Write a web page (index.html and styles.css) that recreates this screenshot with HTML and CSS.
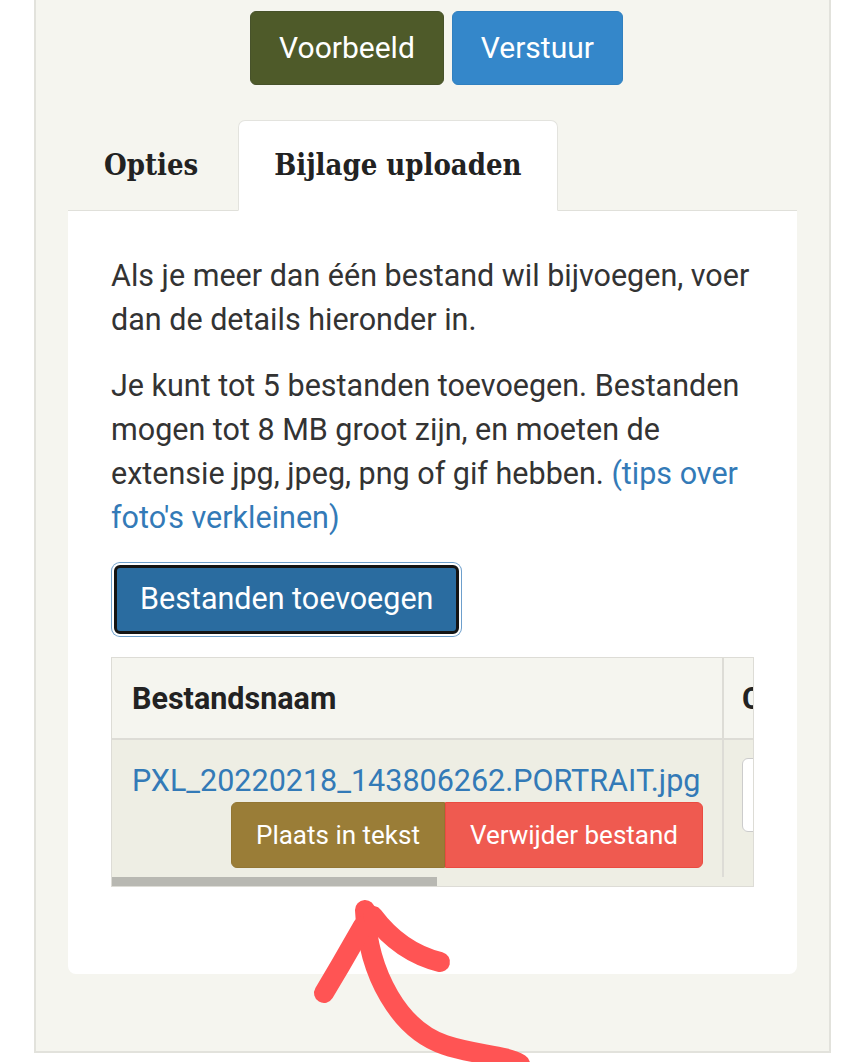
FILE: index.html
```html
<!DOCTYPE html>
<html lang="nl">
<head>
    <meta charset="UTF-8">
    <meta name="viewport" content="width=device-width, initial-scale=1.0">
    <title>Bijlage uploaden</title>
    <link rel="stylesheet" href="styles.css">
</head>
<body>
    <div class="page">
        <div class="actions">
            <button class="btn btn-preview">Voorbeeld</button>
            <button class="btn btn-send">Verstuur</button>
        </div>

        <ul class="tabs">
            <li class="tab">Opties</li>
            <li class="tab active">Bijlage uploaden</li>
        </ul>

        <div class="tab-pane">
            <p>Als je meer dan één bestand wil bijvoegen, voer dan de details hieronder in.</p>
            <p>Je kunt tot 5 bestanden toevoegen. Bestanden mogen tot 8 MB groot zijn, en moeten de extensie jpg, jpeg, png of gif hebben. <a href="#">(tips over foto's verkleinen)</a></p>

            <button class="btn btn-add">Bestanden toevoegen</button>

            <div class="table-frame">
                <div class="table-scroll">
                    <table class="files">
                        <thead>
                            <tr>
                                <th class="col-name">Bestandsnaam</th>
                                <th class="col-caption">Commentaar</th>
                            </tr>
                        </thead>
                        <tbody>
                            <tr>
                                <td class="col-name">
                                    <a href="#" class="file-link">PXL_20220218_143806262.PORTRAIT.jpg</a>
                                    <div class="file-actions">
                                        <button class="btn-sm btn-insert">Plaats in tekst</button><button class="btn-sm btn-remove">Verwijder bestand</button>
                                    </div>
                                </td>
                                <td class="col-caption">
                                    <input type="text" class="caption-input">
                                </td>
                            </tr>
                        </tbody>
                    </table>
                </div>
                <!-- horizontal scrollbar of the table -->
                <div class="scrollbar"><div class="scroll-thumb"></div></div>
            </div>
        </div>
    </div>

    <!-- hand drawn arrow pointing at the buttons -->
    <svg class="scribble" width="864" height="1062" viewBox="0 0 864 1062">
        <g fill="none" stroke="#ff5454" stroke-width="20" stroke-linecap="round" stroke-linejoin="round">
            <path d="M365 910 C368 975 400 1030 445 1045 C475 1055 505 1055 520 1064"/>
            <path d="M363 926 L340 966 L324 993"/>
            <path d="M373 916 Q400 952 440 962"/>
        </g>
    </svg>
</body>
</html>
```

FILE: styles.css
```css
body {
    margin: 0;
    background: #fff;
    font-family: Roboto, "Liberation Sans", sans-serif;
    font-size: 30.5px;
    line-height: 44px;
    color: #333;
}
.page {
    box-sizing: border-box;
    width: 797px;
    margin-left: 34px;
    background: #f5f5ef;
    border: 2px solid #e2e2dc;
    border-top: none;
    padding: 11px 32px 77px;
}
.actions {
    display: flex;
    justify-content: center;
    gap: 8px;
    padding-left: 8px;
}
.btn {
    font-family: inherit;
    font-size: 30px;
    line-height: 40px;
    color: #fff;
    border: 1px solid transparent;
    border-radius: 6px;
    padding: 16px 28px;
    cursor: pointer;
}
.btn-preview {
    background: #4e5a29;
    border-color: #47522a;
}
.btn-send {
    background: #3487ca;
    border-color: #3080c0;
}
.tabs {
    list-style: none;
    margin: 35px 0 0;
    padding: 0;
    display: flex;
    border-bottom: 1px solid #e0e0da;
}
.tab {
    font-family: "DejaVu Serif Condensed", "DejaVu Serif", serif;
    font-weight: bold;
    font-size: 29px;
    color: #222;
    padding: 22px 35px 23px;
    margin-right: 4px;
    margin-bottom: -1px;
    border: 1px solid transparent;
    border-radius: 7px 7px 0 0;
}
.tab.active {
    background: #fff;
    border-color: #e3e3de;
    border-bottom-color: #fff;
}
.tab-pane {
    background: #fff;
    border-radius: 0 0 8px 8px;
    padding: 21px 43px 87px;
}
.tab-pane p {
    margin: 22px 0;
}
.tab-pane a {
    color: #337ab7;
    text-decoration: none;
}
.btn-add {
    display: block;
    margin: 25px 0 3px 3px;
    padding: 11px 23px 12px;
    font-size: 30.5px;
    background: #2a6ca0;
    border: 3px solid #141414;
    box-shadow: 0 0 0 2px #fff, 0 0 0 3px #6d9fcc;
}
.table-frame {
    margin-top: 23px;
    border: 1px solid #dddcd6;
    background: #eeeee4;
}
.table-scroll {
    overflow: hidden;
}
.scrollbar {
    height: 9px;
    background: #eeeee4;
}
.scroll-thumb {
    width: 325px;
    height: 100%;
    background: #b8b8b2;
}
.files {
    border-collapse: separate;
    border-spacing: 0;
    width: 1266px;
}
.files th {
    text-align: left;
    font-weight: bold;
    color: #222;
    background: #f5f5ef;
    padding: 20px 20px 18px;
    line-height: 42px;
    white-space: nowrap;
    border-bottom: 2px solid #dddcd6;
}
.files td {
    background: #eeeee4;
    vertical-align: top;
    padding: 20px 20px 9px;
}
.files .col-name {
    width: 572px;
    padding-right: 18px;
    border-right: 2px solid #dddcd6;
}
.files .col-caption {
    padding-left: 18px;
}
.files td.col-caption {
    padding-top: 18px;
}
.file-link {
    display: block;
    line-height: 42px;
    white-space: nowrap;
}
.file-actions {
    display: flex;
    justify-content: flex-end;
    margin-right: 1px;
}
.btn-sm {
    font-family: inherit;
    font-size: 26px;
    line-height: 36px;
    color: #fff;
    padding: 14px 24px;
    border: 1px solid transparent;
    cursor: pointer;
}
.btn-insert {
    background: #9a7d37;
    border-color: #937633;
    border-radius: 6px 0 0 6px;
}
.btn-remove {
    background: #ef5a50;
    border-color: #ea4b41;
    border-radius: 0 6px 6px 0;
}
.caption-input {
    box-sizing: border-box;
    display: block;
    width: 600px;
    height: 74px;
    border: 1px solid #ccc;
    border-radius: 6px;
    background: #fff;
}
.scribble {
    position: absolute;
    top: 0;
    left: 0;
    pointer-events: none;
}
```
